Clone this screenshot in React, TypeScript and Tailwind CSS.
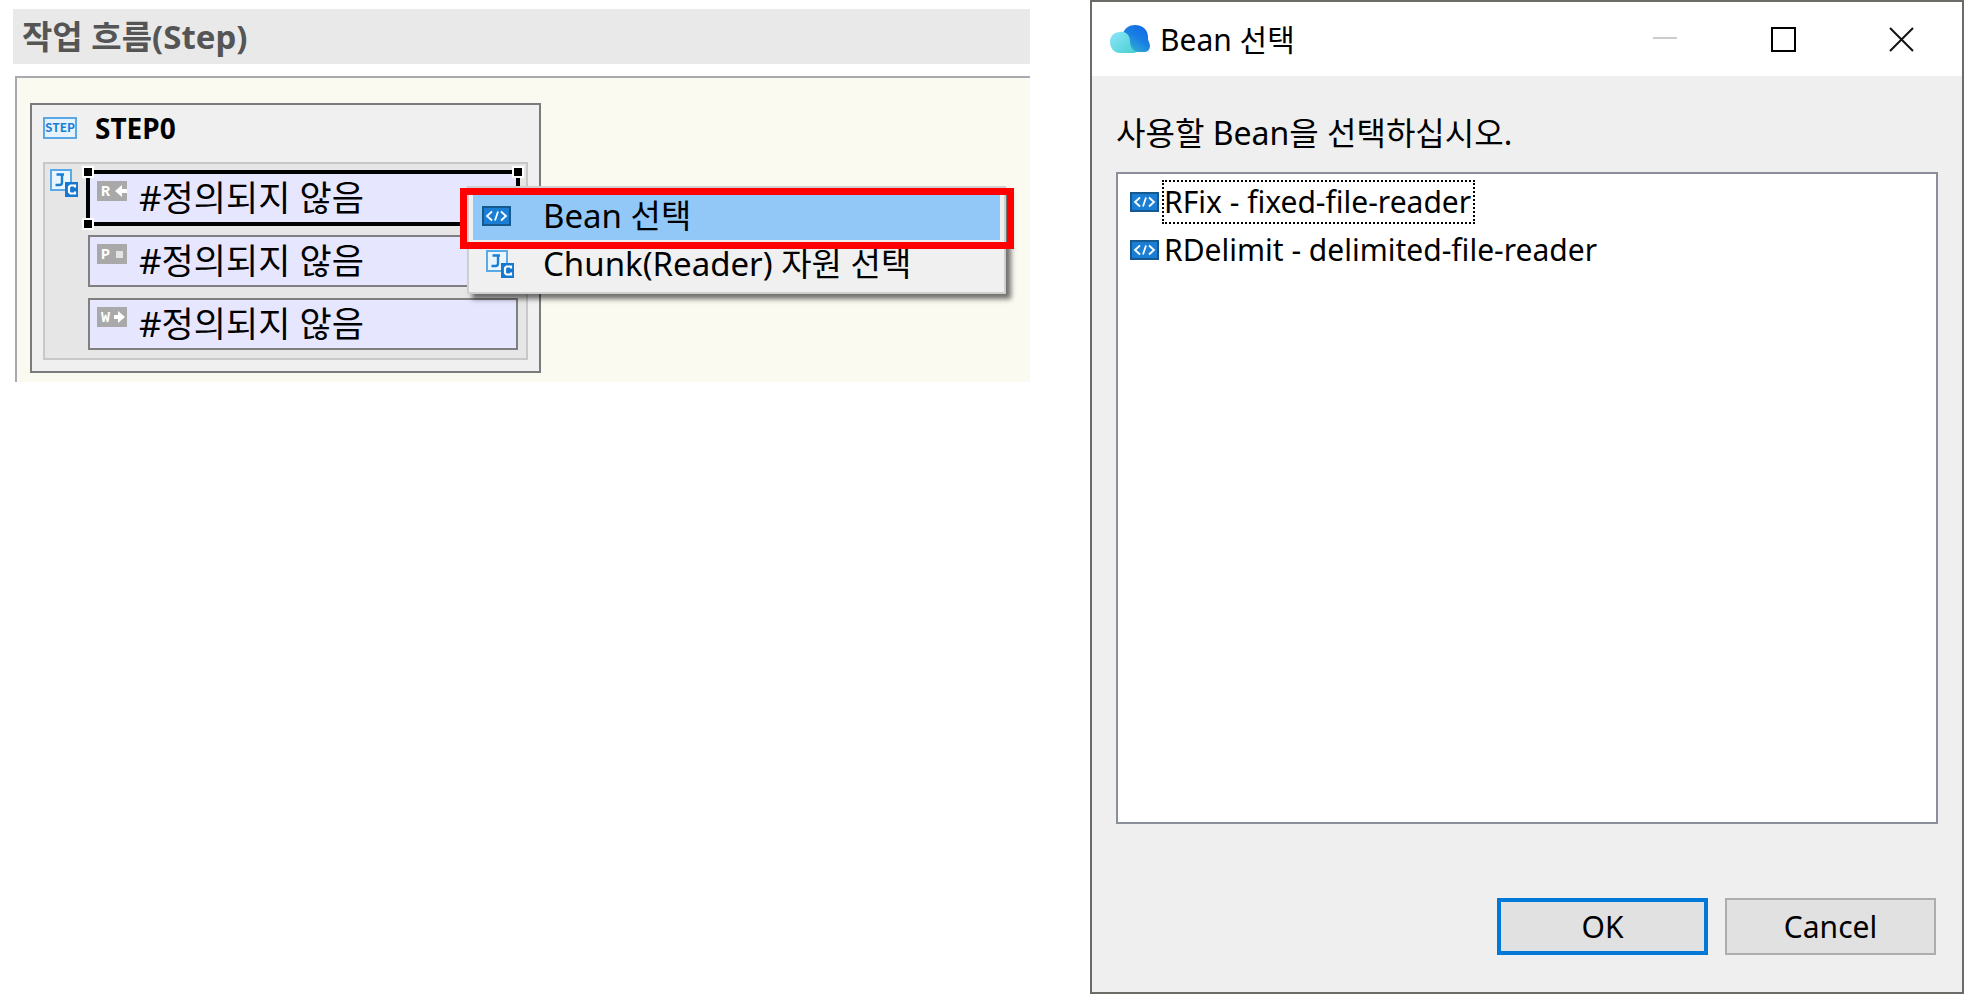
import { useState } from "react";
import clsx from "clsx";

type IconProps = { className?: string };

const StepIcon = () => (
  <svg width="34" height="22" viewBox="0 0 34 22">
    <rect x="1" y="1" width="32" height="20" fill="#e6f3fd" stroke="#5aa9e6" strokeWidth="2" />
    <text
      x="17"
      y="15"
      textAnchor="middle"
      fontFamily="'Noto Sans CJK KR', sans-serif"
      fontSize="12"
      fontWeight="700"
      fill="#1b7fd6"
    >
      STEP
    </text>
  </svg>
);

const ChunkIcon = ({ className }: IconProps) => (
  <svg width="28" height="28" viewBox="0 0 28 28" className={className}>
    <rect x="1" y="1" width="20" height="20" fill="#eaf5fd" stroke="#5aaae8" strokeWidth="2" />
    <path d="M6.500 5.500H14M12 5v8.500q0 2.500-2.500 2.500H5.500" fill="none" stroke="#1b7fd6" strokeWidth="2.400" />
    <rect x="15" y="13" width="13" height="15" fill="#1478d0" />
    <path d="M25 18.500V16.500H20.500L19 18v5l1.500 1.500H25V22.500" fill="none" stroke="#fff" strokeWidth="2.200" />
  </svg>
);

const BeanIcon = ({ className }: IconProps) => (
  <svg width="29" height="20" viewBox="0 0 29 20" className={className}>
    <rect x="1" y="1" width="27" height="18" fill="#1a7fd4" stroke="#16598f" strokeWidth="2" />
    <path d="M10 5.500L5 10l5 4.500M19 5.500L24 10l-5 4.500M16 5.500L13 14.500" fill="none" stroke="#fff" strokeWidth="1.800" />
  </svg>
);

const CloudIcon = () => (
  <svg width="40" height="30" viewBox="0 0 40 30">
    <defs>
      <linearGradient id="cloudBack" x1="1" y1="0" x2="0.300" y2="1">
        <stop offset="0" stopColor="#0f62e6" />
        <stop offset="0.550" stopColor="#1a80e4" />
        <stop offset="1" stopColor="#35b3cf" />
      </linearGradient>
      <linearGradient id="cloudFront" x1="0" y1="0" x2="1" y2="1">
        <stop offset="0" stopColor="#8ee6f8" />
        <stop offset="1" stopColor="#45cfd0" />
      </linearGradient>
    </defs>
    <path d="M13 9C15 4 19 1 25 1c8 0 13 5 13 12 0 2 0 3 1 5 2 4 1 10-5 10H18z" fill="url(#cloudBack)" />
    <path d="M10 8c5-1 10 3 10 9 0 5 2 9 7 11-2 1-4 1-6 1H10C4 29 0 24 0 18 0 12 4 8 10 8z" fill="url(#cloudFront)" />
  </svg>
);

const RoleIcon = ({ role }: { role: string }) => (
  <svg width="30" height="20" viewBox="0 0 30 20" className="mt-[7px] shrink-0">
    <rect width="30" height="20" fill="#a9a9a9" />
    <text x="4" y="15" fontFamily="'Liberation Mono', monospace" fontSize="15" fontWeight="700" fill="#fff">
      {role}
    </text>
    {role === "R" && <path d="M18 10l7-6v4h5v4h-5v4z" fill="#fff" />}
    {role === "P" && <rect x="19" y="7" width="7" height="7" fill="#e4e4e4" />}
    {role === "W" && <path d="M28 10l-7-6v4h-4v4h4v4z" fill="#fff" />}
  </svg>
);

const Handle = ({ className }: IconProps) => (
  <span className={clsx("absolute size-3 border-2 border-white bg-black", className)} />
);

const chunkParts = ["R", "P", "W"];

const beans = ["RFix - fixed-file-reader", "RDelimit - delimited-file-reader"];

const StepNode = ({ selected }: { selected: string }) => (
  <div className="w-[511px] border-2 border-[#7b7b7b] bg-[#f0f0f0] px-[11px] pb-[11px]">
    <div className="mb-[11px] flex h-[46px] items-center gap-[18px]">
      <StepIcon />
      <h2 className="text-[28px] leading-8 font-bold text-black">STEP0</h2>
    </div>
    <div className="flex border-2 border-[#c8c8c8] bg-[#e6e6e6] pr-2 pl-[5px]">
      <ChunkIcon className="mt-[5px] shrink-0" />
      <div className="my-2 ml-[10px] flex flex-1 flex-col gap-[11px]">
        {chunkParts.map((part) => (
          <div
            key={part}
            className={clsx(
              "relative flex h-[52px] border-2 bg-[#e6e6ff] pl-[7px]",
              part === selected ? "border-black outline-2 outline-black" : "border-[#7f7f7f]"
            )}
          >
            <RoleIcon role={part} />
            <span className="ml-3 self-center text-[35px] leading-10 text-black">#정의되지 않음</span>
            {part === selected && (
              <>
                <Handle className="-top-2 -left-2" />
                <Handle className="-bottom-2 -left-2" />
                <Handle className="-top-2 -right-2" />
              </>
            )}
          </div>
        ))}
      </div>
    </div>
  </div>
);

const ContextMenu = () => (
  <div className="absolute top-[108px] left-[450px] w-[539px] border-2 border-[#cfcfcf] bg-[#f0f0f0] p-1 shadow-[5px_5px_5px_rgba(0,0,0,0.550)]">
    <button className="flex h-[48px] w-full items-center bg-[#91c8f7] pl-[9px] text-[33px] text-black">
      <BeanIcon className="mr-8" />
      Bean 선택
    </button>
    <button className="flex h-[48px] w-full items-center pl-[13px] text-[33px] text-black">
      <ChunkIcon className="mr-[29px]" />
      Chunk(Reader) 자원 선택
    </button>
    {/* highlight frame around the first entry */}
    <div className="pointer-events-none absolute top-0 -right-[10px] -left-[9px] h-[61px] border-[7px] border-[#ff0000]" />
  </div>
);

const BeanDialog = () => {
  const [focused, setFocused] = useState(beans[0]);

  return (
    <section className="flex min-h-screen w-[44.500%] shrink-0 flex-col border-2 border-[#6b6b68] bg-[#efefef] text-[30px] text-black">
      <header className="flex h-[74px] items-center bg-white pr-[2px] pl-[18px]">
        <CloudIcon />
        <h1 className="ml-[10px] flex-1">Bean 선택</h1>
        <button aria-label="Minimize" className="flex w-[118px] justify-center">
          <svg width="24" height="24" viewBox="0 0 24 24">
            <path d="M0 11H24" stroke="#cccccc" strokeWidth="2" />
          </svg>
        </button>
        <button aria-label="Maximize" className="flex w-[118px] justify-center">
          <svg width="25" height="25" viewBox="0 0 25 25">
            <rect x="1" y="1" width="23" height="23" fill="none" stroke="#000" strokeWidth="2" />
          </svg>
        </button>
        <button aria-label="Close" className="flex w-[118px] justify-center">
          <svg width="25" height="25" viewBox="0 0 25 25">
            <path d="M1 1L24 24M24 1L1 24" stroke="#111" strokeWidth="2" />
          </svg>
        </button>
      </header>
      <div className="flex flex-1 flex-col px-6 pt-[34px] pb-[37px]">
        <p id="bean-label" className="text-[32px] leading-[46px]">
          사용할 Bean을 선택하십시오.
        </p>
        <ul aria-labelledby="bean-label" className="mt-4 flex-1 border-2 border-[#8a8f99] bg-white px-3 pt-1">
          {beans.map((bean) => (
            <li key={bean} className="flex h-12 items-center gap-[3px]">
              <BeanIcon />
              <button
                onClick={() => setFocused(bean)}
                className={clsx(
                  "border-2 border-dotted pr-[2px] leading-10",
                  bean === focused ? "border-black" : "border-transparent"
                )}
              >
                {bean}
              </button>
            </li>
          ))}
        </ul>
        <div className="mt-[74px] flex justify-end gap-[17px] pr-[2px]">
          <button className="h-[57px] w-[211px] border-4 border-[#0078d7] bg-[#e1e1e1]">OK</button>
          <button className="h-[57px] w-[211px] border-2 border-[#adadad] bg-[#e1e1e1]">Cancel</button>
        </div>
      </div>
    </section>
  );
};

export default function App() {
  return (
    <div className="flex min-h-screen items-start bg-white font-['Noto_Sans','Noto_Sans_CJK_KR',sans-serif]">
      <main className="mr-[60px] ml-[13px] flex-1 pt-[9px]">
        <h1 className="mb-3 bg-[#e9e9e9] pl-[9px] text-[33px] leading-[55px] font-bold text-[#555555]">
          작업 흐름(Step)
        </h1>
        <div className="relative ml-[2px] border-t-2 border-l-2 border-[#a9a9b0] bg-[#fafaf1] pt-[25px] pb-[9px] pl-[13px]">
          <StepNode selected="R" />
          <ContextMenu />
        </div>
      </main>
      <BeanDialog />
    </div>
  );
}
